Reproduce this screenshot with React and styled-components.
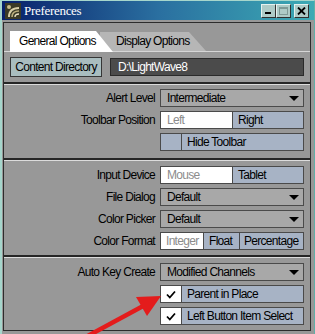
import styled, { createGlobalStyle } from 'styled-components'

const GlobalStyle = createGlobalStyle`
  html, body { margin: 0; padding: 0; background: #989898; }
  body { font-family: "Liberation Sans", Arial, sans-serif; }
  * { box-sizing: border-box; }
`

const Window = styled.div`
  position: relative;
  width: 315px;
  height: 334px;
  overflow: hidden;
  background: #989898;
  border-top: 1px solid #a6d6cc;
  border-left: 2px solid #a6d6cc;
  border-right: 1px solid #5fb0a8;
  font-size: 12px;
  letter-spacing: -0.7px;
  color: #000;
`

const TitleBar = styled.div`
  height: 19px;
  display: flex;
  align-items: center;
  padding: 0 5px 0 3px;
  background: linear-gradient(90deg, #08206a 0%, #2a6fa0 50%, #3caab4 100%);
`

const TitleText = styled.span`
  flex: 1;
  margin-left: 3px;
  color: #fff;
  font-family: "Liberation Serif", "Times New Roman", serif;
  font-size: 13px;
  letter-spacing: -0.3px;
`

const CaptionButtons = styled.div`
  display: flex;
`

const CaptionButton = styled.div`
  width: 15px;
  height: 14px;
  margin-left: ${p => (p.$gap ? '3px' : '0')};
  background: #aecbc7;
  border-top: 1px solid #e6f2f0;
  border-left: 1px solid #e6f2f0;
  border-right: 1px solid #303030;
  border-bottom: 1px solid #303030;
  display: flex;
  align-items: center;
  justify-content: center;
`

const Frame = styled.div`
  margin: 2px 3px 0 1px;
  height: 309px;
  border: 1px solid #2c2c2c;
  display: flex;
  flex-direction: column;
`

const Section = styled.div`
  border-top: ${p => (p.$first ? 'none' : '2px solid #262626')};
  box-shadow: ${p => (p.$first ? 'none' : 'inset 0 1px 0 #dcdcdc')};
  padding: ${p => p.$pad};
  display: flex;
  flex-direction: column;
  gap: ${p => (p.$first ? '0' : '4px')};
  flex: ${p => (p.$grow ? 1 : 'none')};
`

const TabRow = styled.div`
  display: flex;
  height: 21px;
  margin-top: 8px;
  padding-left: 6px;
  border-bottom: 1px solid #d6d6d6;
`

const Tab = styled.div`
  height: ${p => (p.$active ? '21px' : '19px')};
  margin-top: ${p => (p.$active ? '0' : '1px')};
  width: ${p => p.$w}px;
  margin-left: ${p => p.$ml || 0}px;
  padding-left: ${p => p.$pl}px;
  line-height: ${p => (p.$active ? '21px' : '19px')};
  background: ${p => (p.$active ? '#ffffff' : '#b6b6b6')};
  z-index: ${p => (p.$active ? 2 : 1)};
  clip-path: polygon(0 0, ${p => p.$w - 17}px 0, 100% 100%, 0 100%);
  white-space: nowrap;
`

const DirRow = styled.div`
  display: flex;
  gap: 8px;
  margin-top: 5px;
  padding: 0 6px;
  height: 20px;
`

const DirButton = styled.div`
  width: 92px;
  border: 1px solid #363636;
  background: #a9bdbf;
  line-height: 18px;
  text-align: center;
  white-space: nowrap;
`

const DirField = styled.div`
  flex: 1;
  margin: 1px 0;
  border: 1px solid #2a2a2a;
  background: #4b4b4b;
  color: #fff;
  line-height: 16px;
  padding-left: 7px;
`

const Row = styled.div`
  display: grid;
  grid-template-columns: 1fr 144px;
  column-gap: 5px;
  padding-right: 6px;
  height: 18px;
`

const Label = styled.div`
  text-align: right;
  line-height: 18px;
  white-space: nowrap;
`

const Dropdown = styled.div`
  position: relative;
  border: 1px solid #4a4a4a;
  background: #a8a8a8;
  line-height: 16px;
  padding-left: 6px;
  white-space: nowrap;
`

const Arrow = styled.span`
  position: absolute;
  right: 4px;
  top: 6px;
  width: 0;
  height: 0;
  border-left: 5px solid transparent;
  border-right: 5px solid transparent;
  border-top: 5px solid #000;
`

const Toggle = styled.div`
  display: flex;
  border: 1px solid #4a4a4a;
  height: 18px;
`

const ToggleOpt = styled.div`
  flex: ${p => (p.$w ? 'none' : 1)};
  width: ${p => (p.$w ? `${p.$w}px` : 'auto')};
  background: ${p => (p.$on ? '#ffffff' : '#a7b3c5')};
  color: ${p => (p.$on ? '#8c8c8c' : '#000')};
  border-left: ${p => (p.$first ? 'none' : '1px solid #4a4a4a')};
  line-height: 16px;
  padding-left: ${p => p.$pl || 5}px;
  white-space: nowrap;
`

const CheckRow = styled.div`
  display: flex;
  border: 1px solid #4a4a4a;
  height: 18px;
`

const CheckBox = styled.div`
  width: 21px;
  background: ${p => (p.$checked ? '#ffffff' : '#a7b3c5')};
  border-right: 1px solid #4a4a4a;
  display: flex;
  align-items: center;
  justify-content: center;
`

const CheckText = styled.div`
  flex: 1;
  background: #a7b3c5;
  line-height: 16px;
  padding-left: 5px;
  white-space: nowrap;
`

const Overlay = styled.svg`
  position: absolute;
  left: -2px;
  top: -1px;
  pointer-events: none;
`

const Check = () => (
  <svg width="10" height="9" viewBox="0 0 10 9">
    <path d="M1 4.5 L3.8 7.5 L9 1.5" fill="none" stroke="#000" strokeWidth="1.8" />
  </svg>
)

const AppIcon = () => (
  <svg width="16" height="16" viewBox="0 0 16 16">
    <rect x="0" y="0" width="16" height="16" fill="#3b3a26" />
    <path d="M4 14 C4 8 8 5 14 5" fill="none" stroke="#d8cfa8" strokeWidth="2" />
    <path d="M7 14 C7 10 10 8 14 8" fill="none" stroke="#b9ad7c" strokeWidth="1.6" />
    <path d="M10 14 C10 12 12 11 14 11" fill="none" stroke="#e8e0c0" strokeWidth="1.4" />
    <circle cx="4" cy="4" r="2" fill="#c8bc8c" />
  </svg>
)

const Row2 = ({ label, children }) => (
  <Row>
    <Label>{label}</Label>
    {children}
  </Row>
)

export default function App() {
  return (
    <>
      <GlobalStyle />
      <Window>
        <TitleBar>
          <AppIcon />
          <TitleText>Preferences</TitleText>
          <CaptionButtons>
            <CaptionButton>
              <svg width="9" height="8" viewBox="0 0 9 8"><rect x="1" y="5" width="6" height="2" fill="#000" /></svg>
            </CaptionButton>
            <CaptionButton>
              <svg width="11" height="10" viewBox="0 0 11 10">
                <rect x="1.5" y="1.5" width="8" height="7" fill="none" stroke="#7f9a96" />
                <rect x="1" y="1" width="9" height="2" fill="#7f9a96" />
              </svg>
            </CaptionButton>
            <CaptionButton $gap>
              <svg width="9" height="8" viewBox="0 0 9 8">
                <path d="M1 0.5 L8 7.5 M8 0.5 L1 7.5" stroke="#000" strokeWidth="1.8" />
              </svg>
            </CaptionButton>
          </CaptionButtons>
        </TitleBar>

        <Frame>
          <Section $first $pad="0 0 5px 0">
            <TabRow>
              <Tab $active $w={103} $pl={9}>General Options</Tab>
              <Tab $w={106} $ml={-13} $pl={16}>Display Options</Tab>
            </TabRow>
            <DirRow>
              <DirButton>Content Directory</DirButton>
              <DirField>D:\LightWave8</DirField>
            </DirRow>
          </Section>

          <Section $pad="5px 0 7px 0">
            <Row2 label="Alert Level">
              <Dropdown>Intermediate<Arrow /></Dropdown>
            </Row2>
            <Row2 label="Toolbar Position">
              <Toggle>
                <ToggleOpt $on $first $pl={6}>Left</ToggleOpt>
                <ToggleOpt>Right</ToggleOpt>
              </Toggle>
            </Row2>
            <Row2 label="">
              <CheckRow>
                <CheckBox />
                <CheckText>Hide Toolbar</CheckText>
              </CheckRow>
            </Row2>
          </Section>

          <Section $pad="6px 0 5px 0">
            <Row2 label="Input Device">
              <Toggle>
                <ToggleOpt $on $first $pl={6}>Mouse</ToggleOpt>
                <ToggleOpt>Tablet</ToggleOpt>
              </Toggle>
            </Row2>
            <Row2 label="File Dialog">
              <Dropdown>Default<Arrow /></Dropdown>
            </Row2>
            <Row2 label="Color Picker">
              <Dropdown>Default<Arrow /></Dropdown>
            </Row2>
            <Row2 label="Color Format">
              <Toggle>
                <ToggleOpt $on $first $w={42} $pl={5}>Integer</ToggleOpt>
                <ToggleOpt $w={36}>Float</ToggleOpt>
                <ToggleOpt $pl={4}>Percentage</ToggleOpt>
              </Toggle>
            </Row2>
          </Section>

          <Section $grow $pad="6px 0 4px 0">
            <Row2 label="Auto Key Create">
              <Dropdown>Modified Channels<Arrow /></Dropdown>
            </Row2>
            <Row2 label="">
              <CheckRow>
                <CheckBox $checked><Check /></CheckBox>
                <CheckText>Parent in Place</CheckText>
              </CheckRow>
            </Row2>
            <Row2 label="">
              <CheckRow>
                <CheckBox $checked><Check /></CheckBox>
                <CheckText>Left Button Item Select</CheckText>
              </CheckRow>
            </Row2>
          </Section>
        </Frame>

        <Overlay width="315" height="334" viewBox="0 0 315 334">
          <line x1="84" y1="338" x2="145" y2="305" stroke="#e41c1c" strokeWidth="4.5" />
          <polygon points="161,296 136,297 147,316" fill="#e41c1c" />
        </Overlay>
      </Window>
    </>
  )
}
